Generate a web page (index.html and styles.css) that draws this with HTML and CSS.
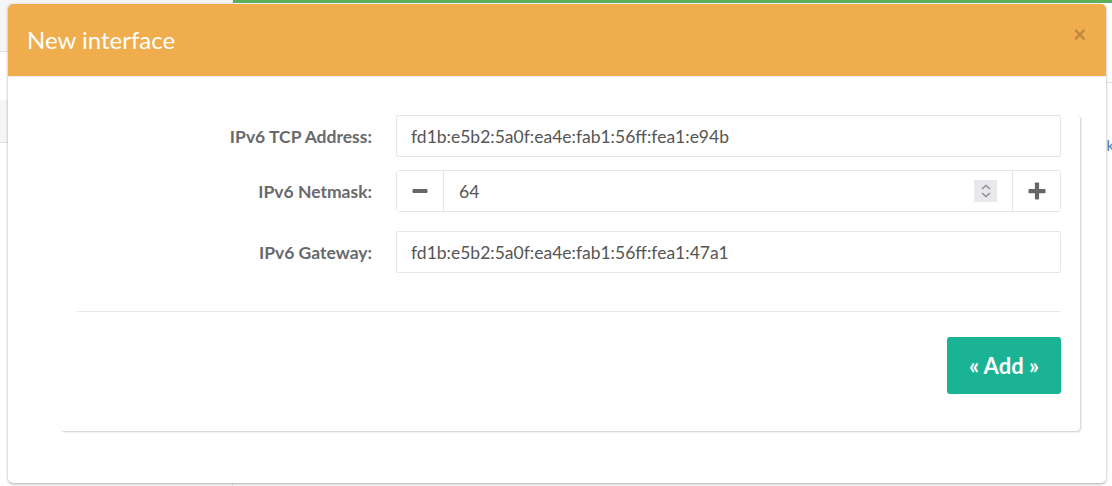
FILE: index.html
```html
<!DOCTYPE html>
<html lang="en">
<head>
<meta charset="utf-8">
<title>New interface</title>
<link rel="stylesheet" href="styles.css">
</head>
<body>
<div class="page">
  <aside class="sidebar">
    <div class="side-block top"></div>
    <div class="side-gap"></div>
    <div class="side-block mid"></div>
  </aside>
  <main class="main">
    <div class="topbar"></div>
    <div class="main-row"><span class="ghost">k</span></div>
  </main>
</div>

<div class="modal">
  <div class="modal-header">
    <h4 class="modal-title">New interface</h4>
    <button class="close" type="button">&times;</button>
  </div>
  <div class="modal-body">
    <div class="panel">
      <div class="form-row first">
        <label class="label">IPv6 TCP Address:</label>
        <div class="control"><input class="input" type="text" value="fd1b:e5b2:5a0f:ea4e:fab1:56ff:fea1:e94b"></div>
      </div>
      <div class="form-row second">
        <label class="label">IPv6 Netmask:</label>
        <div class="control group">
          <button class="addon minus" type="button">
            <svg width="16" height="6" viewBox="0 0 16 6"><rect x="0.5" y="1" width="15" height="4" rx="1" fill="#666"/></svg>
          </button>
          <div class="group-input">
            <span class="value">64</span>
            <span class="spinner">
              <svg width="22" height="22" viewBox="0 0 22 22"><path d="M7 9 L11 5.5 L15 9" fill="none" stroke="#8a8a8f" stroke-width="1.4"/><path d="M7 13 L11 16.5 L15 13" fill="none" stroke="#8a8a8f" stroke-width="1.4"/></svg>
            </span>
          </div>
          <button class="addon plus" type="button">
            <svg width="18" height="18" viewBox="0 0 18 18"><rect x="0.5" y="7" width="17" height="4.2" rx="0.8" fill="#666"/><rect x="6.9" y="0.5" width="4.2" height="17" rx="0.8" fill="#666"/></svg>
          </button>
        </div>
      </div>
      <div class="form-row third">
        <label class="label">IPv6 Gateway:</label>
        <div class="control"><input class="input" type="text" value="fd1b:e5b2:5a0f:ea4e:fab1:56ff:fea1:47a1"></div>
      </div>
      <hr class="sep">
      <div class="actions">
        <button class="btn-add" type="button">&laquo; Add &raquo;</button>
      </div>
    </div>
  </div>
</div>
</body>
</html>
```
FILE: styles.css
```css
* { box-sizing: border-box; }
html, body { margin: 0; padding: 0; }
body {
  width: 1112px;
  height: 486px;
  overflow: hidden;
  position: relative;
  background: #fff;
  font-family: Lato, "Open Sans", "Liberation Sans", sans-serif;
  color: #676a6c;
}

/* background page */
.page { display: flex; height: 486px; }
.sidebar {
  width: 233px;
  border-right: 1px solid #e7e7e7;
  display: flex;
  flex-direction: column;
}
.side-block { background: #f5f5f5; border-bottom: 1px solid #e2e2e2; }
.side-block.top { height: 52px; }
.side-gap { height: 48px; }
.side-block.mid { height: 43px; }
.main { flex: 1; display: flex; flex-direction: column; }
.topbar { height: 3px; background: #5cb05c; }
.main-row {
  margin-top: 79px;
  height: 72px;
  border-top: 1px solid #e3e3e3;
  display: flex;
  justify-content: flex-end;
  align-items: flex-end;
  font-size: 15px;
  color: #4a7ab0;
}
.ghost { margin-right: -2px; }

/* modal (overlay) */
.modal {
  position: absolute;
  left: 8px;
  top: 4px;
  width: 1098px;
  height: 479px;
  background: #fff;
  border-radius: 5px;
  box-shadow: 0 1px 3px rgba(0,0,0,0.35);
  display: flex;
  flex-direction: column;
}
.modal-header {
  flex: 0 0 73px;
  height: 73px;
  background: #f0ad4e;
  border-radius: 5px 5px 0 0;
  border-bottom: 1px solid #ececec;
  display: flex;
  align-items: center;
  justify-content: space-between;
  padding: 0 20px 2px 19px;
}
.modal-title {
  margin: 0;
  font-size: 24px;
  font-weight: 400;
  color: #fff;
}
.close {
  border: 0;
  background: none;
  padding: 0;
  font-family: "Liberation Sans", Arial, sans-serif;
  font-size: 22px;
  font-weight: 700;
  line-height: 1;
  color: #000;
  opacity: 0.2;
  margin-top: -9px;
}

.modal-body {
  padding: 38px 26px 52px 52px;
  flex: 1 1 auto;
  min-height: 0;
  display: flex;
}
.panel {
  flex: 1;
  border-radius: 4px;
  box-shadow: 1px 1px 2px rgba(0,0,0,0.2);
  padding: 0 19px 37px 0;
  display: flex;
  flex-direction: column;
}

.form-row {
  display: grid;
  grid-template-columns: 312px 1fr;
  column-gap: 24px;
  align-items: center;
}
.form-row.second { margin-top: 13px; }
.form-row.third { margin-top: 19px; }
.label {
  text-align: right;
  font-weight: 700;
  font-size: 17.5px;
  color: #676a6c;
}
.input {
  display: block;
  width: 100%;
  height: 42px;
  border: 1px solid #e5e6e7;
  border-radius: 2px;
  padding: 0 14px;
  font-family: Lato, "Open Sans", "Liberation Sans", sans-serif;
  font-size: 17.5px;
  color: #555;
  background: #fff;
  outline: none;
}

.group {
  display: flex;
  height: 42px;
  border: 1px solid #e5e6e7;
  border-radius: 3px;
}
.addon {
  border: 0;
  background: #fff;
  padding: 0;
  display: flex;
  align-items: center;
  justify-content: center;
}
.minus { width: 47px; border-right: 1px solid #e5e6e7; }
.plus { width: 48px; border-left: 1px solid #e5e6e7; }
.group-input {
  flex: 1;
  display: flex;
  align-items: center;
  justify-content: space-between;
  padding: 0 15px 0 15px;
  font-size: 17.5px;
  color: #555;
}
.spinner {
  width: 23px;
  height: 22px;
  background: #e9e9ed;
  display: flex;
  align-items: center;
  justify-content: center;
}

.sep {
  margin: 38px 0 0 17px;
  border: 0;
  border-top: 1px solid #e7eaec;
  height: 0;
}
.actions {
  display: flex;
  justify-content: flex-end;
  margin-top: 25px;
}
.btn-add {
  width: 114px;
  height: 57px;
  border: 0;
  border-radius: 3px;
  background: #1ab394;
  color: #fff;
  font-family: Lato, "Open Sans", "Liberation Sans", sans-serif;
  font-weight: 700;
  font-size: 22px;
  padding: 0;
}
```
